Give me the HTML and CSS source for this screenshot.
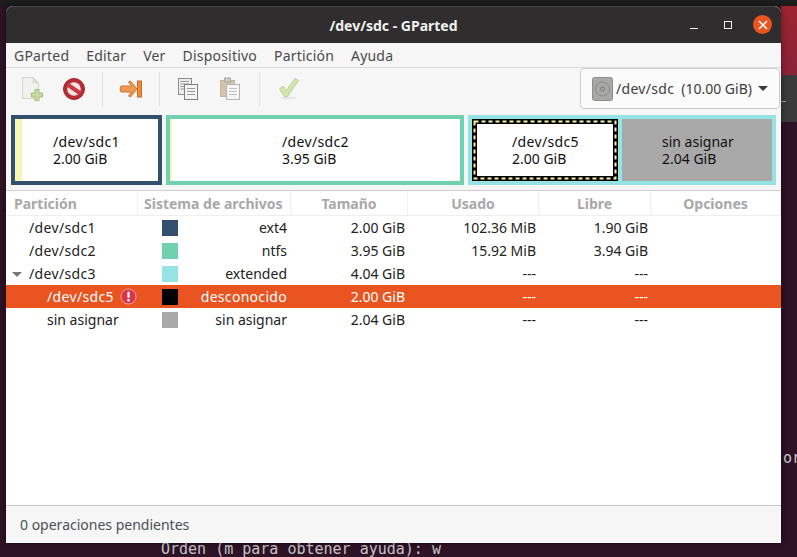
FILE: index.html
```html
<!DOCTYPE html>
<html>

<head>
  <meta charset="UTF-8">
  <title>/dev/sdc - GParted</title>
  <link rel="stylesheet" href="styles.css">
</head>

<body>
  <div class="term-head"></div>
  <div class="term-line term-orden">Orden (m para obtener ayuda): w</div>
  <div class="term-line term-or">or</div>

  <div class="window">
    <div class="titlebar">
      <span class="title">/dev/sdc - GParted</span>
      <div class="win-buttons">
        <span class="win-min"></span>
        <span class="win-max"></span>
        <span class="win-close">
          <svg width="10" height="10" viewBox="0 0 10 10"><path d="M1 1L9 9M9 1L1 9" stroke="#fff" stroke-width="1.5"/></svg>
        </span>
      </div>
    </div>

    <div class="menubar">
      <span>GParted</span>
      <span>Editar</span>
      <span>Ver</span>
      <span>Dispositivo</span>
      <span>Partición</span>
      <span>Ayuda</span>
    </div>

    <div class="toolbar">
      <div class="tool">
        <svg width="24" height="26" viewBox="0 0 24 26">
          <path d="M2.5 1.5H13L18.5 7V22.5H2.5Z" fill="#f1f1ef" stroke="#d6d6d2"/>
          <path d="M13 1.5V7H18.5Z" fill="#dcdcd8" stroke="#d0d0cc" stroke-width=".6"/>
          <path d="M15 13.5H19V17H22.5V21H19V24.5H15V21H11.5V17H15Z" fill="#c5dba0" stroke="#a5bd80"/>
        </svg>
      </div>
      <div class="tool">
        <svg width="24" height="24" viewBox="0 0 24 24">
          <circle cx="12" cy="12" r="10.5" fill="#b92c35" stroke="#a3222c"/>
          <circle cx="12" cy="12" r="6.8" fill="#f2e4e4"/>
          <path d="M5.5 7.5L18.5 16.5" stroke="#c73a42" stroke-width="4"/>
        </svg>
      </div>
      <div class="tool-sep"></div>
      <div class="tool">
        <svg width="24" height="20" viewBox="0 0 24 20">
          <path d="M2 7H12.5L9.5 3L11.5 2L18 10L11.5 18L9.5 17L12.5 13H2Q.2 10 2 7Z" fill="#ee9a55" stroke="#d5752e"/>
          <rect x="18.5" y="2" width="4" height="16" fill="#ec8a3e" stroke="#cf6a24"/>
        </svg>
      </div>
      <div class="tool-sep"></div>
      <div class="tool">
        <svg width="22" height="24" viewBox="0 0 22 24">
          <rect x="1.5" y="1.5" width="13" height="16" fill="#ececec" stroke="#8c8c8c"/>
          <path d="M3.5 4.5H12M3.5 7H12M3.5 9.5H12M3.5 12H12" stroke="#9c9c9c"/>
          <rect x="7.5" y="7.5" width="13" height="15" fill="#f4f4f4" stroke="#7f7f7f"/>
          <path d="M10 11.5H18M10 14.5H18M10 17.5H18" stroke="#999"/>
        </svg>
      </div>
      <div class="tool">
        <svg width="22" height="24" viewBox="0 0 22 24">
          <rect x="1.5" y="3.5" width="14" height="16" fill="#d3c3ac" stroke="#c2b49e"/>
          <rect x="5.5" y="1" width="6" height="4" fill="#c9c9c9" stroke="#aaa"/>
          <rect x="7.5" y="7.5" width="13" height="15" fill="#f5f5f5" stroke="#b5b5b5"/>
          <path d="M10 11.5H18M10 14.5H18M10 17.5H18" stroke="#c4c4c4"/>
        </svg>
      </div>
      <div class="tool-sep tool-sep-wide"></div>
      <div class="tool">
        <svg width="22" height="24" viewBox="0 0 22 24">
          <ellipse cx="10" cy="21" rx="8" ry="1.5" fill="#e6e6e4"/>
          <path d="M1.5 12L5 9L8.5 13.5L17 1.5L20.5 3.5L9 20H7Z" fill="#d6e3ad" stroke="#bccf93"/>
        </svg>
      </div>

      <div class="device-select">
        <svg width="21" height="24" viewBox="0 0 21 24">
          <rect x=".5" y=".5" width="20" height="23" rx="2" fill="#a8a8a6" stroke="#8c8c8a"/>
          <circle cx="10.5" cy="12" r="7" fill="none" stroke="#8a8a88"/>
          <circle cx="10.5" cy="12" r="2" fill="none" stroke="#777"/>
        </svg>
        <span class="device-name">/dev/sdc</span>
        <span class="device-size">(10.00 GiB)</span>
        <span class="arrow-down"></span>
      </div>
    </div>

    <div class="partmap">
      <div class="block block-sdc1">
        <div class="used used-sdc1"></div>
        <div class="block-label"><span class="dev">/dev/sdc1</span><br>2.00 GiB</div>
      </div>
      <div class="block block-sdc2">
        <div class="used used-sdc2"></div>
        <div class="block-label"><span class="dev">/dev/sdc2</span><br>3.95 GiB</div>
      </div>
      <div class="block-ext">
        <div class="block-sel">
          <svg class="sel-dashes" width="146" height="62" viewBox="0 0 146 62">
            <rect x="2.5" y="2.5" width="141" height="57" fill="none" stroke="#f8f4a4" stroke-width="2" stroke-dasharray="4 3"/>
          </svg>
          <div class="block-label"><span class="dev">/dev/sdc5</span><br>2.00 GiB</div>
        </div>
        <div class="block-free">
          <div class="block-label">sin asignar<br>2.04 GiB</div>
        </div>
      </div>
    </div>

    <div class="tree">
      <div class="row head">
        <div class="cell first">Partición</div>
        <div class="cell first">Sistema de archivos</div>
        <div class="cell mid">Tamaño</div>
        <div class="cell mid">Usado</div>
        <div class="cell mid">Libre</div>
        <div class="cell mid">Opciones</div>
      </div>

      <div class="row">
        <div class="cell name"><span class="dev">/dev/sdc1</span></div>
        <div class="cell fs"><i class="swatch c-ext4"></i><span>ext4</span></div>
        <div class="cell num">2.00 GiB</div>
        <div class="cell num">102.36 MiB</div>
        <div class="cell num">1.90 GiB</div>
        <div class="cell"></div>
      </div>
      <div class="row">
        <div class="cell name"><span class="dev">/dev/sdc2</span></div>
        <div class="cell fs"><i class="swatch c-ntfs"></i><span>ntfs</span></div>
        <div class="cell num">3.95 GiB</div>
        <div class="cell num">15.92 MiB</div>
        <div class="cell num">3.94 GiB</div>
        <div class="cell"></div>
      </div>
      <div class="row">
        <div class="cell name"><i class="expander"></i><span class="dev">/dev/sdc3</span></div>
        <div class="cell fs"><i class="swatch c-extended"></i><span>extended</span></div>
        <div class="cell num">4.04 GiB</div>
        <div class="cell num dash">---</div>
        <div class="cell num dash">---</div>
        <div class="cell"></div>
      </div>
      <div class="row selected">
        <div class="cell name child"><span class="dev">/dev/sdc5</span>
          <svg class="warn" width="17" height="17" viewBox="0 0 17 17">
            <circle cx="8.5" cy="8.5" r="7.5" fill="#d9344a" stroke="#eda0a8"/>
            <rect x="7.4" y="3.6" width="2.2" height="6.4" rx="1" fill="#fff"/>
            <circle cx="8.5" cy="12.2" r="1.3" fill="#fff"/>
          </svg>
        </div>
        <div class="cell fs"><i class="swatch c-unknown"></i><span class="wide-text">desconocido</span></div>
        <div class="cell num">2.00 GiB</div>
        <div class="cell num dash">---</div>
        <div class="cell num dash">---</div>
        <div class="cell"></div>
      </div>
      <div class="row">
        <div class="cell name child">sin asignar</div>
        <div class="cell fs"><i class="swatch c-free"></i><span>sin asignar</span></div>
        <div class="cell num">2.04 GiB</div>
        <div class="cell num dash">---</div>
        <div class="cell num dash">---</div>
        <div class="cell"></div>
      </div>
    </div>

    <div class="statusbar">0 operaciones pendientes</div>
  </div>
</body>

</html>
```

FILE: styles.css
```css
* {
  box-sizing: border-box;
}

html,
body {
  height: 100%;
  margin: 0;
  overflow: hidden;
}

body {
  position: relative;
  font-family: "Noto Sans", sans-serif;
  font-size: 14px;
  color: #3d3d3d;
  background-color: #300a24;
  background-image:
    linear-gradient(#1c1c1c, #1c1c1c),
    linear-gradient(#2e1225, #2e1225);
  background-repeat: no-repeat;
  background-size: 100% 6px, 100% 100%;
}

.term-head {
  position: absolute;
  right: 0;
  top: 6px;
  width: 16px;
  height: 116px;
  background:
    linear-gradient(#9a9a9a, #9a9a9a) left 0 top 95px / 5px 1px no-repeat,
    linear-gradient(#9c2430 0, #8a2238 69px, #3a3a3a 69px);
}

.term-line {
  position: absolute;
  font-family: "DejaVu Sans Mono", monospace;
  font-size: 15px;
  line-height: 18px;
  color: #c9c5c8;
}

.term-orden {
  left: 161px;
  top: 540px;
}

.term-or {
  left: 783px;
  top: 449px;
}

.window {
  position: absolute;
  left: 6px;
  top: 6px;
  width: 775px;
  height: 537px;
  display: flex;
  flex-direction: column;
  background-color: #f6f6f6;
  border-radius: 7px 7px 0 0;
  box-shadow: 0 0 6px rgba(0, 0, 0, 0.45);
}

.titlebar {
  position: relative;
  flex: 0 0 37px;
  display: flex;
  align-items: center;
  justify-content: center;
  background: #2f2d2d;
  border-top: 1px solid #454343;
  border-radius: 7px 7px 0 0;
}

.title {
  color: #f2f2f2;
  font-weight: bold;
  font-size: 14px;
}

.win-buttons {
  position: absolute;
  right: 9px;
  top: 8px;
  display: flex;
  align-items: center;
}

.win-min {
  width: 8px;
  height: 1px;
  margin-top: 8px;
  background: #f0f0f0;
}

.win-max {
  width: 8px;
  height: 8px;
  margin-left: 26px;
  border: 1px solid #f0f0f0;
}

.win-close {
  width: 19px;
  height: 19px;
  margin-left: 21px;
  border-radius: 50%;
  background: #e95420;
  display: flex;
  align-items: center;
  justify-content: center;
}

.menubar {
  flex: 0 0 25px;
  display: flex;
  gap: 17px;
  align-items: center;
  padding: 1px 0 0 8px;
  border-bottom: 1px solid #dcdcda;
  color: #4a4a4a;
  letter-spacing: 0.2px;
}

.toolbar {
  position: relative;
  flex: 0 0 45px;
  display: flex;
  align-items: center;
  padding: 0 0 4px 5px;
}

.tool {
  width: 42px;
  height: 34px;
  display: flex;
  align-items: center;
  justify-content: center;
}

.tool-sep {
  width: 1px;
  height: 34px;
  margin: 0 7px;
  background: #dededc;
}

.tool-sep-wide {
  margin: 0 8px;
}

.device-select {
  position: absolute;
  right: 1px;
  top: 0;
  width: 200px;
  height: 41px;
  display: flex;
  align-items: center;
  padding: 0 0 0 11px;
  background: #fbfbfb;
  border: 1px solid #cfcdca;
  border-radius: 4px;
}

.device-name {
  margin-left: 3px;
  letter-spacing: 0.3px;
}

.device-size {
  margin-left: 7px;
}

.arrow-down {
  margin-left: 6px;
  border-left: 5px solid transparent;
  border-right: 5px solid transparent;
  border-top: 5px solid #3d3d3d;
}

.partmap {
  flex: 0 0 77px;
  display: flex;
  gap: 4px;
  padding: 2px 5px 5px 5px;
}

.block {
  position: relative;
  height: 70px;
  background: #fff;
  border: 4px solid;
}

.block-sdc1 {
  width: 151px;
  border-color: #34506f;
}

.block-sdc2 {
  width: 298px;
  border-color: #6fd1ae;
}

.used {
  position: absolute;
  left: 0;
  top: 0;
  bottom: 0;
  background: #f8f6b4;
}

.used-sdc1 {
  width: 7px;
}

.used-sdc2 {
  width: 2px;
}

.block-label {
  color: #111;
  line-height: 17px;
}

.dev {
  letter-spacing: 0.35px;
}

.block-sdc1 .block-label {
  padding: 14px 0 0 38px;
}

.block-sdc2 .block-label {
  padding: 14px 0 0 112px;
}

.block-ext {
  width: 308px;
  height: 70px;
  display: flex;
  gap: 4px;
  padding: 4px;
  background: #95e3e5;
}

.block-sel {
  position: relative;
  width: 146px;
  background: #fff;
  border: 5px solid #000;
  padding: 9px 0 0 35px;
}

.sel-dashes {
  position: absolute;
  left: -5px;
  top: -5px;
}

.block-free {
  width: 150px;
  background: #a9a9a9;
  padding: 14px 0 0 40px;
}

.tree {
  flex: 1;
  background: #fff;
  border-top: 1px solid #cfcfcf;
  border-bottom: 1px solid #c8c8c8;
  color: #222;
}

.row {
  display: grid;
  grid-template-columns: 132px 153px 117px 131px 112px 1fr;
  height: 23px;
}

.cell {
  display: flex;
  align-items: center;
  white-space: nowrap;
}

.head {
  height: 25px;
  color: #a8a8a8;
  font-weight: bold;
  border-bottom: 1px solid #efefef;
}

.head .cell {
  border-right: 1px solid #efefef;
}

.first {
  padding-left: 8px;
}

.first + .first {
  padding-left: 6px;
}

.mid {
  justify-content: center;
}

.name {
  position: relative;
  padding-left: 23px;
}

.child {
  padding-left: 41px;
}

.expander {
  position: absolute;
  left: 6px;
  top: 10px;
  border-left: 5px solid transparent;
  border-right: 5px solid transparent;
  border-top: 5px solid #777;
}

.fs {
  justify-content: space-between;
  padding: 0 4px 0 24px;
}

.wide-text {
  letter-spacing: 0.3px;
}

.num {
  justify-content: flex-end;
  padding-right: 3px;
}

.swatch {
  width: 16px;
  height: 16px;
}

.c-ext4 {
  background: #34506f;
}

.c-ntfs {
  background: #6fd1ae;
}

.c-extended {
  background: #95e3e5;
}

.c-unknown {
  background: #000;
}

.c-free {
  background: #a9a9a9;
}

.selected {
  background: #e95420;
  color: #fff;
}

.warn {
  margin-left: 6px;
}

.statusbar {
  flex: 0 0 37px;
  display: flex;
  align-items: center;
  padding-left: 14px;
  color: #4a5058;
}
```
